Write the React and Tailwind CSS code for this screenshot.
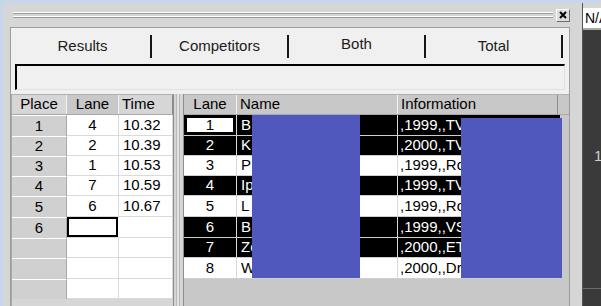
import React from "react";

const LEFT_ROWS = [
  { place: "1", lane: "4", time: "10.32", h: "h-[21px]" },
  { place: "2", lane: "2", time: "10.39", h: "h-[20px]" },
  { place: "3", lane: "1", time: "10.53", h: "h-[20px]" },
  { place: "4", lane: "7", time: "10.59", h: "h-[20px]" },
  { place: "5", lane: "6", time: "10.67", h: "h-[21px]" },
  { place: "6", lane: "", time: "", h: "h-[21px]", focus: true },
  { place: "", lane: "", time: "", h: "h-[20px]" },
  { place: "", lane: "", time: "", h: "h-[21px]" },
  { place: "", lane: "", time: "", h: "h-[20px]" },
];

const RIGHT_ROWS = [
  { lane: "1", name: "B", info: ",1999,,TV", dark: true, h: "h-[21px]", sel: true },
  { lane: "2", name: "K", info: ",2000,,TV", dark: true, h: "h-[20px]" },
  { lane: "3", name: "P", info: ",1999,,Ro", dark: false, h: "h-[20px]" },
  { lane: "4", name: "Ip", info: ",1999,,TV", dark: true, h: "h-[20px]" },
  { lane: "5", name: "L", info: ",1999,,Ro", dark: false, h: "h-[21px]" },
  { lane: "6", name: "B", info: ",1999,,VS", dark: true, h: "h-[21px]" },
  { lane: "7", name: "Zo", info: ",2000,,ET", dark: true, h: "h-[20px]" },
  { lane: "8", name: "W", info: ",2000,,Dr", dark: false, h: "h-[21px]" },
];

const TABS = ["Results", "Competitors", "Both", "Total"];

function Tab({ label }) {
  const raised = label === "Both";
  return (
    <div className="flex items-center">
      <span className={`flex-1 text-center text-[15px] text-[#1c1c1c] ${raised ? "mb-[3px]" : "mt-[2px]"}`}>{label}</span>
      <span className="w-[2px] h-[23px] bg-[#161616] self-end mb-[2px]" />
    </div>
  );
}

function LeftGrid() {
  return (
    <div className="w-[161px] flex flex-col bg-[#d6d6d6]">
      {/* header */}
      <div className="h-[21px] flex border-t border-t-[#b0b0b0] border-b border-b-[#a8a8a8] text-[15px]">
        <div className="w-[55px] flex items-center justify-center bg-[#d6d6d6] border-r border-r-[#f2f2f2]">Place</div>
        <div className="w-[52px] flex items-center justify-center bg-[#c8c8c8] border-r border-r-[#f2f2f2]">Lane</div>
        <div className="w-[54px] flex items-center pl-[3px] bg-[#d6d6d6] border-r border-r-[#8c8c8c]">Time</div>
      </div>
      {LEFT_ROWS.map((r, i) => (
        <div key={i} className={`${r.h} flex text-[15px]`}>
          <div className="w-[55px] flex items-center justify-center bg-[#d0d0d0] border-t border-t-white border-r border-r-[#a8a8a8]">
            {r.place}
          </div>
          {r.focus ? (
            <div className="w-[52px] bg-white border-b border-b-[#dadada]">
              <div className="w-[51px] h-full border-2 border-black" />
            </div>
          ) : (
            <div className="w-[52px] flex items-center justify-center bg-white border-b border-r border-[#dadada]">
              {r.lane}
            </div>
          )}
          <div className="w-[54px] flex items-center pl-[4px] bg-white border-b border-r border-[#dadada]">
            {r.time}
          </div>
        </div>
      ))}
    </div>
  );
}

function RightGrid() {
  return (
    <div className="relative w-[387px] flex flex-col bg-[#c8c8c8] border-l border-l-[#8c8c8c]">
      <div className="h-[21px] flex border-t border-t-[#b0b0b0] border-b border-b-[#a8a8a8] text-[15px]">
        <div className="w-[53px] flex items-center justify-center bg-[#c8c8c8] border-r border-r-[#f2f2f2]">Lane</div>
        <div className="w-[161px] flex items-center pl-[3px] bg-[#c8c8c8] border-r border-r-[#f2f2f2]">Name</div>
        <div className="w-[160px] flex items-center pl-[3px] bg-[#c8c8c8] border-r border-r-[#8c8c8c]">Information</div>
      </div>
      {RIGHT_ROWS.map((r, i) => {
        const bg = r.dark ? "bg-black text-white" : "bg-white text-black";
        return (
          <div key={i} className={`${r.h} w-[376px] flex text-[15px] ${bg} border-b border-b-[#cfcfcf]`}>
            {r.sel ? (
              <div className="w-[53px] flex items-center justify-center bg-black border-r border-r-[#d8d8d8] px-[3px] py-[3px]">
                <div className="w-full h-full bg-white text-black flex items-center justify-center">{r.lane}</div>
              </div>
            ) : (
              <div className="w-[53px] flex items-center justify-center border-r border-r-[#d8d8d8]">{r.lane}</div>
            )}
            <div className="w-[161px] flex items-center pl-[4px] border-r border-r-[#d8d8d8] overflow-hidden whitespace-nowrap">
              {r.name}
            </div>
            <div className="flex-1 flex items-center pl-[2px] overflow-hidden whitespace-nowrap">{r.info}</div>
          </div>
        );
      })}
      {/* redaction blocks */}
      <div className="absolute left-[68px] top-[21px] w-[108px] h-[163px] bg-[#5058be]" />
      <div className="absolute left-[277px] top-[24px] w-[101px] h-[160px] bg-[#5058be]" />
    </div>
  );
}

export default function App() {
  return (
    <div className="w-[601px] h-[306px] overflow-hidden bg-[#c5d7eb] pt-[3px] pl-[3px] font-['Liberation_Sans',Arial,sans-serif] text-black">
      <div className="flex h-full bg-[#d6d6d6]">
        {/* docked results window */}
        <div className="w-[569px] flex flex-col">
          <div className="h-[24px] shrink-0 flex items-center pl-[10px]">
            <div className="w-[540px] flex flex-col gap-[2px]">
              <div className="h-[2px] border-t border-b border-t-white border-b-[#9a9a9a]" />
              <div className="h-[2px] border-t border-b border-t-white border-b-[#9a9a9a]" />
            </div>
            <div className="ml-[3px] w-[14px] h-[13px] flex items-center justify-center bg-[#dcdcdc] border border-t-white border-l-white border-r-[#6e6e6e] border-b-[#6e6e6e]">
              <svg width="8" height="8" viewBox="0 0 8 8">
                <path d="M1 1L7 7M7 1L1 7" stroke="#000" strokeWidth="2" />
              </svg>
            </div>
          </div>

          <div className="ml-[7px] w-[560px] flex-1 min-h-0 flex flex-col bg-[#f0f0f0] border-t border-l border-r border-[#9c9c9c]">
            <div className="mt-[3px] ml-[4px] w-[548px] h-[29px] grid grid-cols-4">
              {TABS.map((t) => (
                <Tab key={t} label={t} />
              ))}
            </div>

            <div className="mt-[4px] ml-[4px] w-[550px] h-[26px] bg-[#f0f0f0] border-t-2 border-l-2 border-r border-b border-t-black border-l-black border-r-[#e0e0e0] border-b-[#e0e0e0]" />

            <div className="mt-[4px] flex-1 min-h-0 flex bg-[#d6d6d6]">
              <div className="w-[1px] bg-[#a8a8a8]" />
              <LeftGrid />
              <div className="w-[10px] flex justify-center bg-[#d4d4d4] border-l border-l-[#8c8c8c]">
                <div className="w-[4px] border-x border-[#b8b8b8] bg-[#e2e2e2]" />
              </div>
              <RightGrid />
            </div>
          </div>
        </div>

        {/* splitter */}
        <div className="w-[11px] bg-[#d6d6d6] border-r border-r-[#555555]" />

        {/* side panel */}
        <div className="w-[18px] flex flex-col">
          <div className="mt-[5px] h-[22px] bg-white border-b-2 border-b-[#a8a8a8] pl-[2px] flex items-center text-[14px] whitespace-nowrap overflow-hidden">
            N/A
          </div>
          <div className="flex-1 flex flex-col bg-[#3a3a3a]">
            <div className="h-[118px]" />
            <div className="h-[16px] pl-[11px] text-[15px] leading-[16px] text-[#cfcfcf]">1</div>
            <div className="h-[124px]" />
            <div className="h-[1px] bg-[#6a6a6a]" />
          </div>
        </div>
      </div>
    </div>
  );
}
